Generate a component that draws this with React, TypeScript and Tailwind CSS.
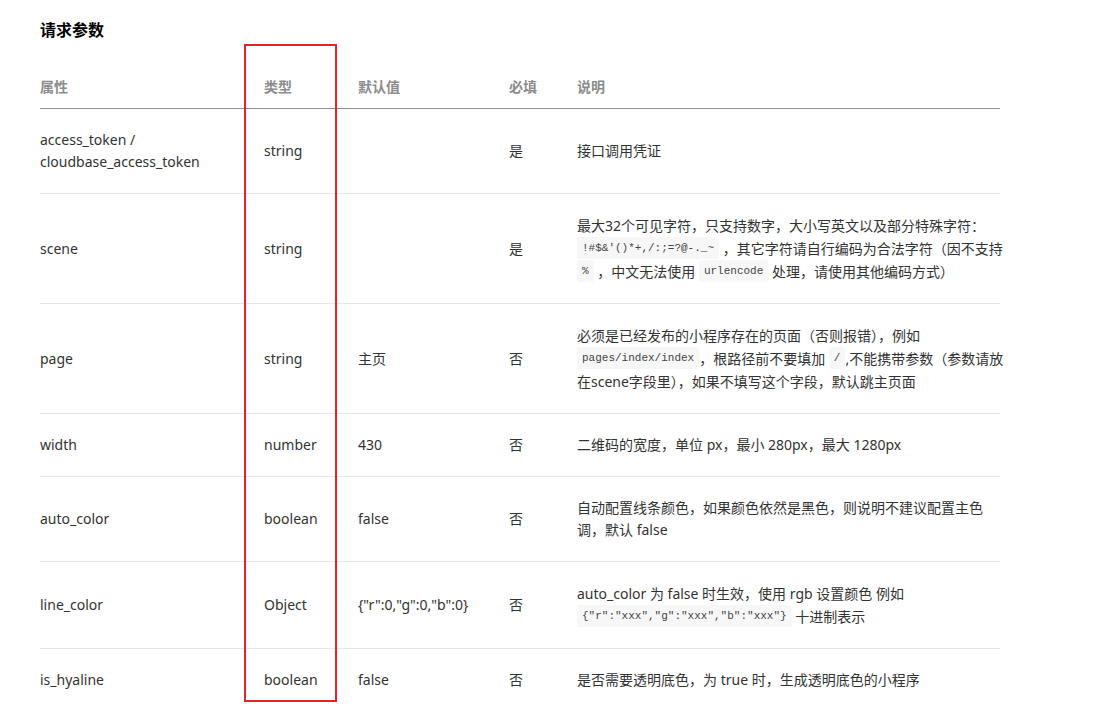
import type { ReactNode } from 'react';

// one piece of a description line: plain text or an inline code chip
type Piece = string | { code: string };

interface Param {
  name: string[];
  type: string;
  def: string;
  required: string;
  desc: Piece[][];
  tall?: boolean;
}

const PARAMS: Param[] = [
  {
    name: ['access_token /', 'cloudbase_access_token'],
    type: 'string',
    def: '',
    required: '是',
    desc: [['接口调用凭证']],
  },
  {
    name: ['scene'],
    type: 'string',
    def: '',
    required: '是',
    tall: true,
    desc: [
      ['最大32个可见字符，只支持数字，大小写英文以及部分特殊字符：'],
      [{ code: "!#$&'()*+,/:;=?@-._~" }, ' ，其它字符请自行编码为合法字符（因不支持'],
      [{ code: '%' }, ' ，中文无法使用 ', { code: 'urlencode' }, ' 处理，请使用其他编码方式）'],
    ],
  },
  {
    name: ['page'],
    type: 'string',
    def: '主页',
    required: '否',
    tall: true,
    desc: [
      ['必须是已经发布的小程序存在的页面（否则报错），例如'],
      [{ code: 'pages/index/index' }, '，根路径前不要填加 ', { code: '/' }, ',不能携带参数（参数请放'],
      ['在scene字段里），如果不填写这个字段，默认跳主页面'],
    ],
  },
  {
    name: ['width'],
    type: 'number',
    def: '430',
    required: '否',
    desc: [['二维码的宽度，单位 px，最小 280px，最大 1280px']],
  },
  {
    name: ['auto_color'],
    type: 'boolean',
    def: 'false',
    required: '否',
    desc: [['自动配置线条颜色，如果颜色依然是黑色，则说明不建议配置主色'], ['调，默认 false']],
  },
  {
    name: ['line_color'],
    type: 'Object',
    def: '{"r":0,"g":0,"b":0}',
    required: '否',
    tall: true,
    desc: [
      ['auto_color 为 false 时生效，使用 rgb 设置颜色 例如'],
      [{ code: '{"r":"xxx","g":"xxx","b":"xxx"}' }, ' 十进制表示'],
    ],
  },
  {
    name: ['is_hyaline'],
    type: 'boolean',
    def: 'false',
    required: '否',
    desc: [['是否需要透明底色，为 true 时，生成透明底色的小程序']],
  },
];

const HEADERS = ['属性', '类型', '默认值', '必填', '说明'];

function Code({ children }: { children: ReactNode }) {
  return (
    <code className="inline-block h-[22px] rounded-[3px] bg-[#f7f7f7] px-[5px] align-top font-['Liberation_Mono',monospace] text-[11px] leading-[22px] text-[#444]">
      {children}
    </code>
  );
}

export default function App() {
  return (
    <div className="relative min-h-[710px] w-[1107px] bg-white pt-5 font-['Noto_Sans','Noto_Sans_CJK_SC',sans-serif] text-[14px] text-[#333]">
      <h2 className="ml-10 text-[16px] leading-5 font-bold text-black">请求参数</h2>

      <table className="mt-4 ml-10 w-[960px] table-fixed border-collapse">
        <colgroup>
          <col className="w-[224px]" />
          <col className="w-[94px]" />
          <col className="w-[151px]" />
          <col className="w-[68px]" />
          <col className="w-[423px]" />
        </colgroup>
        <thead>
          <tr className="border-b border-[#8c8c8c]">
            {HEADERS.map((h) => (
              <th key={h} className="p-0 pt-5 pb-[10px] text-left leading-[22px] font-bold text-[#8c8c8c]">
                {h}
              </th>
            ))}
          </tr>
        </thead>
        <tbody>
          {PARAMS.map((p) => (
            <tr key={p.name.join('')} className="border-b border-[#e6e6e6] last:border-b-0">
              <td className="p-0 py-5 align-middle leading-[22px]">
                {p.name.map((n) => (
                  <div key={n}>{n}</div>
                ))}
              </td>
              <td className="p-0 py-5 align-middle leading-[22px]">{p.type}</td>
              <td className="p-0 py-5 align-middle leading-[22px]">{p.def}</td>
              <td className="p-0 py-5 align-middle leading-[22px]">{p.required}</td>
              <td className={`p-0 py-5 align-middle ${p.tall ? 'leading-[23px]' : 'leading-[22px]'}`}>
                {p.desc.map((line, i) => (
                  <div key={i} className="whitespace-pre">
                    {line.map((piece, j) =>
                      typeof piece === 'string' ? <span key={j}>{piece}</span> : <Code key={j}>{piece.code}</Code>
                    )}
                  </div>
                ))}
              </td>
            </tr>
          ))}
        </tbody>
      </table>

      {/* annotation box around the type column */}
      <div className="pointer-events-none absolute top-[44px] left-[244px] h-[658px] w-[93px] border-2 border-[#e8202a]" />
    </div>
  );
}
